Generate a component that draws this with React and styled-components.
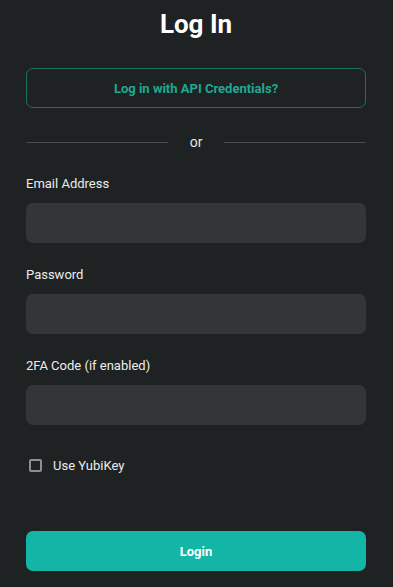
import React from 'react';
import styled, { createGlobalStyle } from 'styled-components';

const GlobalStyle = createGlobalStyle`
  html, body {
    margin: 0;
    padding: 0;
    background-color: #1f2222;
  }
  body {
    font-family: Roboto, "Liberation Sans", sans-serif;
  }
`;

const Page = styled.div`
  width: 100%;
  min-height: 587px;
  background-color: #1f2222;
  display: flex;
  padding-left: 26px;
  box-sizing: border-box;
`;

const Form = styled.form`
  width: 340px;
  display: flex;
  flex-direction: column;
  padding-top: 8px;
`;

const Title = styled.h1`
  margin: 0;
  font-size: 26px;
  line-height: 32px;
  font-weight: 700;
  color: #ffffff;
  text-align: center;
`;

const OutlineButton = styled.button`
  margin-top: 28px;
  height: 40px;
  background: transparent;
  border: 1px solid #1d6f62;
  border-radius: 7px;
  color: #1fa892;
  font-family: inherit;
  font-size: 13px;
  font-weight: 700;
  cursor: pointer;
`;

const Divider = styled.div`
  margin-top: 24px;
  height: 20px;
  display: flex;
  align-items: center;
  gap: 22px;
  color: #e6e6e6;
  font-size: 14px;

  &::before,
  &::after {
    content: '';
    flex: 1;
    height: 1px;
    background-color: #4a4d4e;
  }
`;

const Fields = styled.div`
  margin-top: 24px;
  display: flex;
  flex-direction: column;
  gap: 24px;
`;

const Field = styled.label`
  display: flex;
  flex-direction: column;
  gap: 11px;
`;

const Label = styled.span`
  font-size: 13px;
  line-height: 16px;
  color: #ececec;
`;

const Input = styled.input`
  height: 40px;
  box-sizing: border-box;
  border: none;
  border-radius: 7px;
  background-color: #323637;
  padding: 0 12px;
  color: #fff;
  font-family: inherit;
  font-size: 13px;
  outline: none;
`;

const CheckRow = styled.label`
  margin-top: 32px;
  height: 16px;
  display: flex;
  align-items: center;
  gap: 11px;
  padding-left: 3px;
  font-size: 13px;
  color: #ececec;
`;

const Box = styled.span`
  width: 13px;
  height: 13px;
  box-sizing: border-box;
  border: 2px solid #8d8f90;
  border-radius: 2px;
`;

const PrimaryButton = styled.button`
  margin-top: 58px;
  height: 40px;
  border: none;
  border-radius: 7px;
  background-color: #13b6a6;
  color: #ffffff;
  font-family: inherit;
  font-size: 13px;
  font-weight: 700;
  cursor: pointer;
`;

const fields = [
  { key: 'email', label: 'Email Address', type: 'email' },
  { key: 'password', label: 'Password', type: 'password' },
  { key: 'code', label: '2FA Code (if enabled)', type: 'text' },
];

export default function App() {
  return (
    <Page>
      <GlobalStyle />
      <Form onSubmit={e => e.preventDefault()}>
        <Title>Log In</Title>
        <OutlineButton type="button">Log in with API Credentials?</OutlineButton>
        <Divider>or</Divider>
        <Fields>
          {fields.map(f => (
            <Field key={f.key}>
              <Label>{f.label}</Label>
              <Input type={f.type} />
            </Field>
          ))}
        </Fields>
        <CheckRow>
          <Box />
          Use YubiKey
        </CheckRow>
        <PrimaryButton type="submit">Login</PrimaryButton>
      </Form>
    </Page>
  );
}
